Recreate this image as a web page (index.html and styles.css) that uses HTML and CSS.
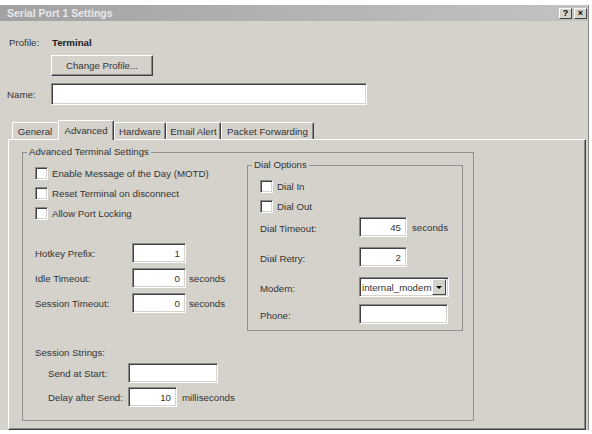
FILE: index.html
```html
<!DOCTYPE html>
<html>
<head>
<meta charset="utf-8">
<title>Serial Port 1 Settings</title>
<link rel="stylesheet" href="styles.css">
</head>
<body>
<div class="window">
  <div class="titlebar">
    <span class="title">Serial Port 1 Settings</span>
    <div class="tbtns"><span class="tbtn">?</span><span class="tbtn">×</span></div>
  </div>
  <div class="profile-row"><span class="plabel">Profile:</span><span class="pvalue">Terminal</span></div>
  <div class="btn-row"><span class="button">Change Profile...</span></div>
  <div class="name-row"><span class="nlabel">Name:</span><span class="input name-input"></span></div>
  <div class="tabs">
    <span class="tab t-general">General</span>
    <span class="tab t-adv active">Advanced</span>
    <span class="tab t-hw">Hardware</span>
    <span class="tab t-email">Email Alert</span>
    <span class="tab t-pf">Packet Forwarding</span>
  </div>
  <div class="panel">
    <fieldset class="group main-group">
      <legend>Advanced Terminal Settings</legend>
      <div class="group-body">
        <div class="left-col">
          <div class="check-row"><span class="cb"></span><span>Enable Message of the Day (MOTD)</span></div>
          <div class="check-row"><span class="cb"></span><span>Reset Terminal on disconnect</span></div>
          <div class="check-row"><span class="cb"></span><span>Allow Port Locking</span></div>
          <div class="field-row first"><span class="flabel">Hotkey Prefix:</span><span class="input num w54">1</span></div>
          <div class="field-row"><span class="flabel">Idle Timeout:</span><span class="input num w54">0</span><span class="unit">seconds</span></div>
          <div class="field-row"><span class="flabel">Session Timeout:</span><span class="input num w54">0</span><span class="unit">seconds</span></div>
          <div class="section-label">Session Strings:</div>
          <div class="string-row"><span class="slabel">Send at Start:</span><span class="input w90"></span></div>
          <div class="string-row"><span class="slabel">Delay after Send:</span><span class="input num w49">10</span><span class="unit wide">milliseconds</span></div>
        </div>
        <fieldset class="group dial-group">
          <legend>Dial Options</legend>
          <div class="dial-check first"><span class="cb"></span><span>Dial In</span></div>
          <div class="dial-check"><span class="cb"></span><span>Dial Out</span></div>
          <div class="dial-field r-timeout"><span class="dlabel">Dial Timeout:</span><span class="input num w48">45</span><span class="unit wide">seconds</span></div>
          <div class="dial-field r-retry"><span class="dlabel">Dial Retry:</span><span class="input num w48">2</span></div>
          <div class="dial-field r-modem"><span class="dlabel">Modem:</span><span class="input select w90"><span class="sel-text">internal_modem</span><span class="dd"><span class="tri"></span></span></span></div>
          <div class="dial-field r-phone"><span class="dlabel">Phone:</span><span class="input w89"></span></div>
        </fieldset>
      </div>
    </fieldset>
  </div>
</div>
</body>
</html>
```

FILE: styles.css
```css
* { box-sizing: border-box; }
html, body { margin: 0; padding: 0; }
body {
  width: 592px;
  height: 434px;
  overflow: hidden;
  background: #ffffff;
  font-family: "Liberation Sans", Arial, sans-serif;
  font-size: 9.7px;
  color: #333333;
}
.window {
  margin-top: 5px;
  width: 589px;
  height: 425px;
  background: #d5d2cc;
  border-right: 1px solid #8a8a8a;
  display: flex;
  flex-direction: column;
}
.titlebar {
  height: 16px;
  flex: none;
  display: flex;
  align-items: center;
  padding: 0 1px 0 7px;
  background: linear-gradient(to right, #a2a2a2, #c3c3c3);
}
.title {
  color: #e8e8e8;
  font-weight: bold;
  font-size: 10.5px;
}
.tbtns { margin-left: auto; display: flex; gap: 2px; }
.tbtn {
  width: 13px;
  height: 11px;
  background: #d5d2cc;
  border: 1px solid;
  border-color: #ffffff #404040 #404040 #ffffff;
  font-weight: bold;
  font-size: 9px;
  line-height: 9px;
  text-align: center;
  color: #000;
}
.profile-row {
  margin-top: 14px;
  height: 14px;
  display: flex;
  align-items: center;
  padding-left: 9px;
}
.plabel { width: 43px; }
.pvalue { font-weight: bold; color: #1a1a1a; }
.btn-row { margin-top: 6px; padding-left: 51px; display: flex; }
.button {
  width: 102px;
  height: 21px;
  display: flex;
  align-items: center;
  justify-content: center;
  border: 1px solid;
  border-color: #ffffff #404040 #404040 #ffffff;
  box-shadow: inset -1px -1px 0 #8a8a8a;
}
.name-row {
  margin-top: 7px;
  height: 22px;
  display: flex;
  align-items: center;
  padding-left: 7px;
}
.nlabel { width: 44px; }
.input {
  display: flex;
  align-items: center;
  height: 20px;
  background: #ffffff;
  border: 1px solid;
  border-color: #8a8a8a #ffffff #ffffff #8a8a8a;
  box-shadow: inset 1px 1px 0 #404040, inset -1px -1px 0 #d5d2cc;
  flex: none;
}
.name-input { width: 316px; height: 22px; }
.num { justify-content: flex-end; padding-right: 5px; }
.w54 { width: 54px; }
.w48 { width: 48px; }
.w49 { width: 49px; }
.w90 { width: 90px; }
.w89 { width: 89px; }
.unit { margin-left: 3px; }
.unit.wide { margin-left: 5px; }

.tabs {
  margin-top: 15px;
  height: 19px;
  flex: none;
  display: flex;
  align-items: flex-start;
  padding-left: 12px;
}
.tab {
  margin-top: 2px;
  height: 17px;
  display: flex;
  align-items: center;
  justify-content: center;
  border-top: 1px solid #ffffff;
  border-left: 1px solid #ffffff;
  border-right: 1px solid #404040;
  box-shadow: inset -1px 0 0 #8a8a8a;
  border-radius: 2px 2px 0 0;
}
.tab.active {
  margin-top: 0;
  height: 20px;
  position: relative;
  z-index: 1;
  background: #d5d2cc;
}
.t-general { width: 46px; border-right-color: #d5d2cc; box-shadow: none; }
.t-adv { width: 56px; }
.t-hw { width: 52px; }
.t-email { width: 55px; }
.t-pf { width: 93px; }

.panel {
  margin-left: 8px;
  width: 578px;
  height: 291px;
  flex: none;
  border: 1px solid;
  border-color: #ffffff #404040 #404040 #ffffff;
  box-shadow: inset -1px -1px 0 #8a8a8a;
}
.group {
  margin: 0;
  padding: 0;
  border: 1px solid #909090;
  min-width: 0;
}
.group legend {
  padding: 0 2px;
  margin-left: 4px;
  line-height: 12px;
  height: 12px;
}
.main-group {
  margin: 6px 0 0 13px;
  width: 452px;
  height: 275px;
}
.group-body { display: flex; }
.left-col { width: 224px; padding-top: 5px; flex: none; }
.check-row {
  height: 20px;
  display: flex;
  align-items: center;
  padding-left: 12px;
}
.cb {
  width: 13px;
  height: 13px;
  flex: none;
  margin-right: 4px;
  background: #ffffff;
  border: 1px solid;
  border-color: #8a8a8a #ffffff #ffffff #8a8a8a;
  box-shadow: inset 1px 1px 0 #404040, inset -1px -1px 0 #d5d2cc;
}
.field-row {
  display: flex;
  align-items: center;
  height: 20px;
  padding-left: 12px;
  margin-top: 5px;
}
.field-row.first { margin-top: 20px; }
.flabel { width: 97px; }
.section-label {
  margin-top: 34px;
  height: 12px;
  line-height: 12px;
  padding-left: 12px;
}
.string-row {
  display: flex;
  align-items: center;
  height: 20px;
  padding-left: 25px;
  margin-top: 4px;
}
.slabel { width: 80px; }

.dial-group {
  margin-top: 1px;
  width: 216px;
  height: 172px;
  flex: none;
}
.dial-check {
  height: 20px;
  display: flex;
  align-items: center;
  padding-left: 12px;
}
.dial-check.first { margin-top: 5px; }
.dial-field {
  display: flex;
  align-items: center;
  height: 20px;
  padding-left: 12px;
}
.dlabel { width: 99px; padding-top: 2px; }
.r-timeout { margin-top: 1px; }
.r-retry { margin-top: 10px; }
.r-modem { margin-top: 10px; }
.r-phone { margin-top: 7px; }
.select { padding-left: 2px; padding-right: 2px; }
.sel-text { flex: 1; white-space: nowrap; overflow: hidden; }
.dd {
  width: 14px;
  height: 16px;
  flex: none;
  display: flex;
  align-items: center;
  justify-content: center;
  background: #d5d2cc;
  border: 1px solid;
  border-color: #ffffff #404040 #404040 #ffffff;
}
.tri {
  width: 0;
  height: 0;
  border-left: 3px solid transparent;
  border-right: 3px solid transparent;
  border-top: 3px solid #000;
}
```
